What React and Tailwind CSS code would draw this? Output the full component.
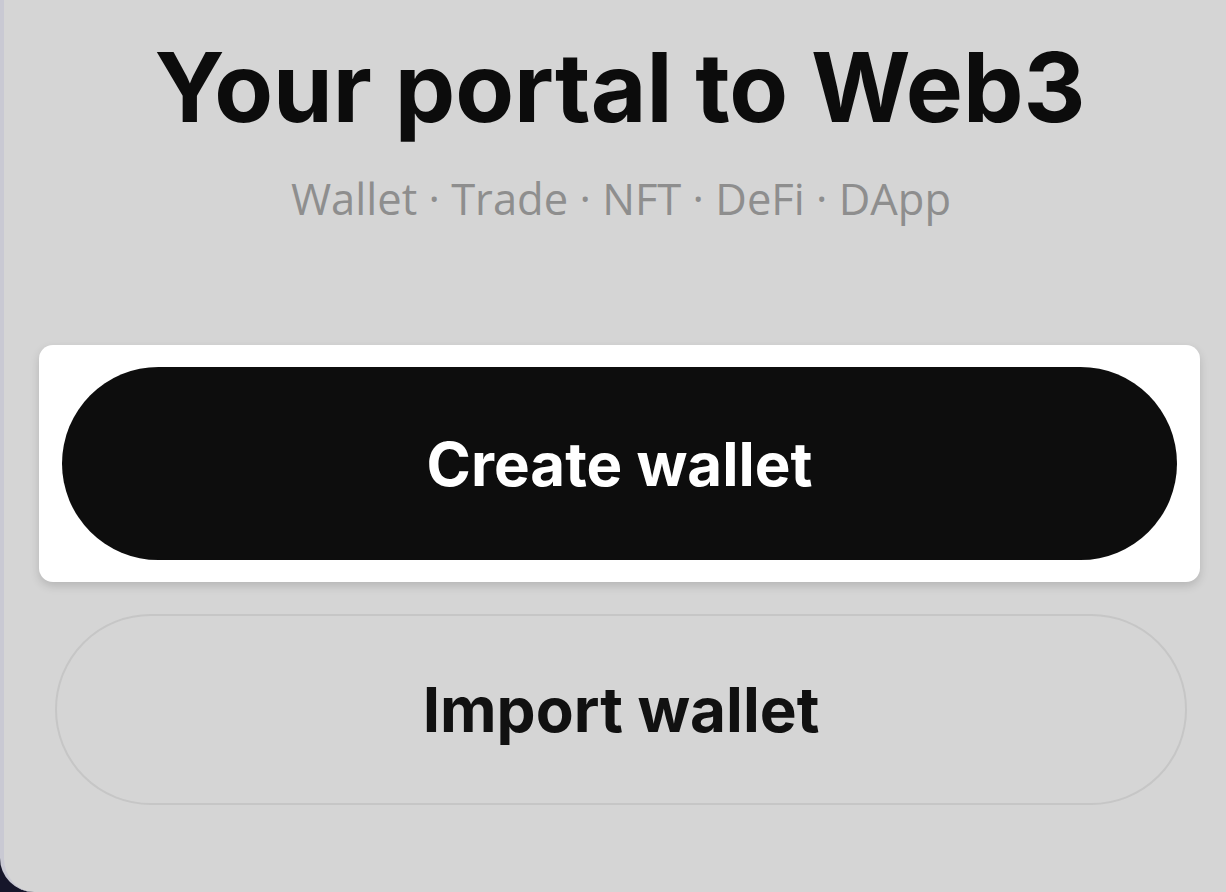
export default function App() {
  return (
    <div className="h-[892px] w-[1226px] overflow-hidden bg-[#16162a]">
      <div className="flex h-full flex-col items-center rounded-bl-[34px] border-l-[4px] border-[#c9c9d3] bg-[#d5d5d5]">
        <h1 className="ml-[10px] mt-[27px] font-['Inter','Liberation_Sans',sans-serif] text-[96px] font-bold leading-[120px] text-[#0c0c0c]">
          Your portal to Web3
        </h1>
        <p className="ml-[12px] mt-[24px] font-['Open_Sans','Noto_Sans',sans-serif] text-[43.5px] leading-[56px] text-[#8e8e8e]">
          Wallet · Trade · NFT · DeFi · DApp
        </p>
        <div className="ml-[35px] mt-[118px] w-[1161px] self-start rounded-[14px] bg-white px-[23px] py-[22px] shadow-[0_4px_10px_rgba(0,0,0,0.15)]">
          <button className="flex h-[193px] w-full items-center justify-center rounded-full bg-[#0d0d0d] font-['Inter','Liberation_Sans',sans-serif] text-[60px] font-bold text-white">
            Create wallet
          </button>
        </div>
        <button className="ml-[51px] mt-[32px] flex h-[191px] w-[1132px] items-center justify-center self-start rounded-full border-2 border-[#c6c6c6] font-['Inter','Liberation_Sans',sans-serif] text-[62px] font-bold text-[#111]">
          Import wallet
        </button>
      </div>
    </div>
  );
}
